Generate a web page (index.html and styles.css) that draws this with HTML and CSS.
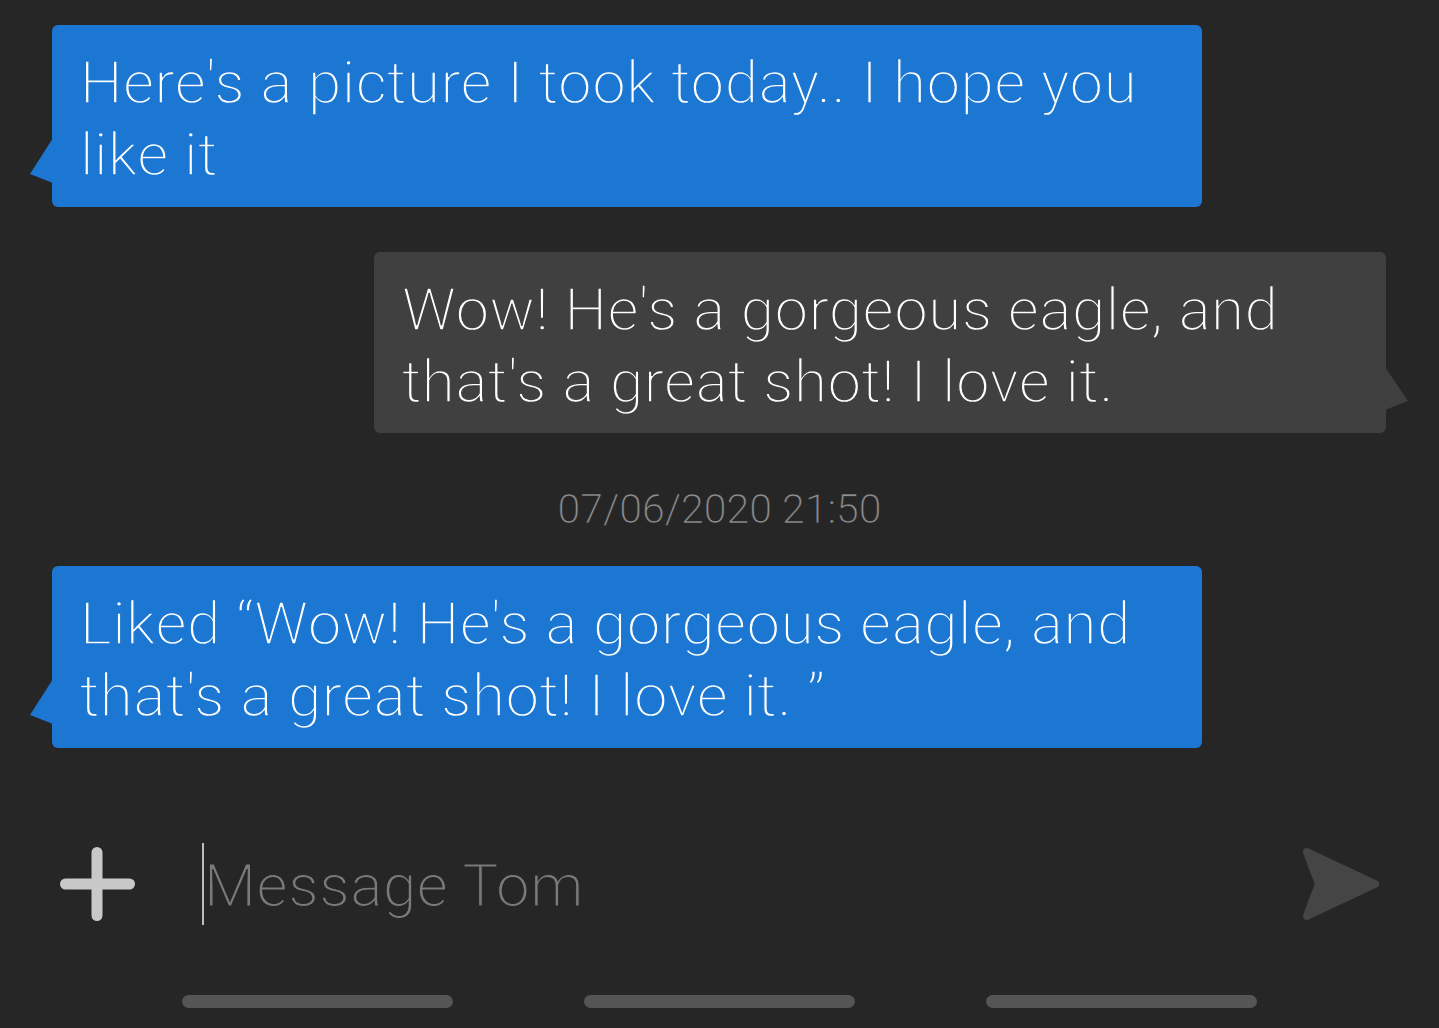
FILE: index.html
```html
<!DOCTYPE html>
<html lang="en">
<head>
<meta charset="utf-8">
<title>Conversation with Tom</title>
<link rel="stylesheet" href="styles.css">
</head>
<body>
<div class="screen">
  <div class="thread">
    <div class="row row-left">
      <div class="bubble bubble-in">Here's a picture I took today.. I hope you<br>like it</div>
    </div>
    <div class="row row-right">
      <div class="bubble bubble-out">Wow! He's a gorgeous eagle, and<br>that's a great shot! I love it.</div>
    </div>
    <div class="stamp">07/06/2020 21:50</div>
    <div class="row row-left">
      <div class="bubble bubble-in">Liked “Wow! He's a gorgeous eagle, and<br>that's a great shot! I love it. ”</div>
    </div>
  </div>
  <div class="composer">
    <svg class="plus" width="77" height="77" viewBox="0 0 77 77">
      <path d="M38 6.5V69.5M6.5 38H70.5" stroke="#c8c8c8" stroke-width="11" stroke-linecap="round" fill="none"/>
    </svg>
    <div class="field">
      <span class="cursor"></span>
      <span class="placeholder">Message Tom</span>
    </div>
    <svg class="send" width="86" height="82" viewBox="0 0 86 82">
      <path d="M9 9L77 41L9 73L21 41Z" fill="#454545" stroke="#454545" stroke-width="8" stroke-linejoin="round"/>
    </svg>
  </div>
  <div class="nav">
    <span class="navbar"></span>
    <span class="navbar"></span>
    <span class="navbar"></span>
  </div>
</div>
</body>
</html>
```

FILE: styles.css
```css
html, body {
  margin: 0;
  padding: 0;
  background: #262626;
}
body {
  font-family: "Roboto Light", Roboto, "Liberation Sans", sans-serif;
  overflow: hidden;
}
.screen {
  width: 1439px;
  height: 1028px;
  display: flex;
  flex-direction: column;
}
.thread {
  display: flex;
  flex-direction: column;
  padding: 25px 0 0 0;
}
.row {
  display: flex;
}
.row-left {
  padding-left: 52px;
}
.row-right {
  justify-content: flex-end;
  padding-right: 53px;
  margin-top: 45px;
}
.bubble {
  position: relative;
  box-sizing: border-box;
  font-size: 60px;
  font-weight: 300;
  line-height: 72px;
  letter-spacing: 0.5px;
  color: #ffffff;
  border-radius: 6px;
  padding: 22px 20px 16px 28px;
  white-space: nowrap;
}
.bubble-in {
  width: 1150px;
  background: #1c77d3;
  -webkit-text-stroke: 1.3px #1c77d3;
}
.bubble-out {
  width: 1012px;
  height: 181px;
  background: #404040;
  -webkit-text-stroke: 1.3px #404040;
}
.bubble-in::before {
  content: "";
  position: absolute;
  left: -22px;
  top: 113px;
  width: 23px;
  height: 45px;
  background: #1c77d3;
  clip-path: polygon(100% 0, 0 80%, 100% 100%);
}
.bubble-out::after {
  content: "";
  position: absolute;
  right: -22px;
  top: 115px;
  width: 23px;
  height: 43px;
  background: #404040;
  clip-path: polygon(0 0, 100% 79%, 0 100%);
}
.stamp {
  margin-top: 52px;
  margin-bottom: 33px;
  text-align: center;
  font-size: 41px;
  line-height: 48px;
  color: #909090;
  font-weight: 300;
  -webkit-text-stroke: 0.6px #262626;
}
.composer {
  margin-top: 86px;
  height: 100px;
  display: flex;
  align-items: center;
  padding-left: 59px;
  padding-right: 55px;
}
.plus {
  display: block;
  flex: none;
}
.field {
  margin-left: 66px;
  display: flex;
  align-items: flex-start;
  height: 82px;
  flex: 1;
}
.cursor {
  width: 2px;
  height: 82px;
  background: #bdbdbd;
  flex: none;
}
.placeholder {
  font-size: 60px;
  font-weight: 300;
  line-height: 82px;
  letter-spacing: 0.6px;
  padding-top: 2px;
  color: #7a7a7a;
  -webkit-text-stroke: 1px #262626;
}
.send {
  display: block;
  flex: none;
}
.nav {
  margin-top: 61px;
  display: flex;
  justify-content: center;
  gap: 131px;
}
.navbar {
  display: block;
  width: 271px;
  height: 13px;
  border-radius: 7px;
  background: #555555;
}
```
